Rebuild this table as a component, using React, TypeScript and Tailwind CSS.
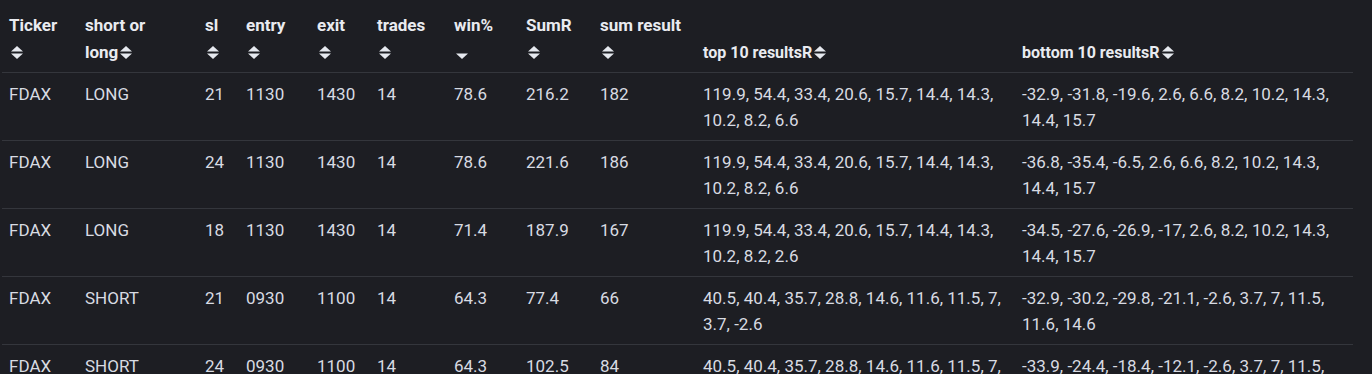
const headers: { label: string; w: number; sort: 'both' | 'down' }[] = [
  { label: 'Ticker', w: 76, sort: 'both' },
  { label: 'short or long', w: 120, sort: 'both' },
  { label: 'sl', w: 41, sort: 'both' },
  { label: 'entry', w: 71, sort: 'both' },
  { label: 'exit', w: 60, sort: 'both' },
  { label: 'trades', w: 77, sort: 'both' },
  { label: 'win%', w: 72, sort: 'down' },
  { label: 'SumR', w: 74, sort: 'both' },
  { label: 'sum result', w: 103, sort: 'both' },
  { label: 'top 10 resultsR', w: 319, sort: 'both' },
  { label: 'bottom 10 resultsR', w: 338, sort: 'both' },
];

const rows = [
  ['FDAX', 'LONG', '21', '1130', '1430', '14', '78.6', '216.2', '182', '119.9, 54.4, 33.4, 20.6, 15.7, 14.4, 14.3, 10.2, 8.2, 6.6', '-32.9, -31.8, -19.6, 2.6, 6.6, 8.2, 10.2, 14.3, 14.4, 15.7'],
  ['FDAX', 'LONG', '24', '1130', '1430', '14', '78.6', '221.6', '186', '119.9, 54.4, 33.4, 20.6, 15.7, 14.4, 14.3, 10.2, 8.2, 6.6', '-36.8, -35.4, -6.5, 2.6, 6.6, 8.2, 10.2, 14.3, 14.4, 15.7'],
  ['FDAX', 'LONG', '18', '1130', '1430', '14', '71.4', '187.9', '167', '119.9, 54.4, 33.4, 20.6, 15.7, 14.4, 14.3, 10.2, 8.2, 2.6', '-34.5, -27.6, -26.9, -17, 2.6, 8.2, 10.2, 14.3, 14.4, 15.7'],
  ['FDAX', 'SHORT', '21', '0930', '1100', '14', '64.3', '77.4', '66', '40.5, 40.4, 35.7, 28.8, 14.6, 11.6, 11.5, 7, 3.7, -2.6', '-32.9, -30.2, -29.8, -21.1, -2.6, 3.7, 7, 11.5, 11.6, 14.6'],
  ['FDAX', 'SHORT', '24', '0930', '1100', '14', '64.3', '102.5', '84', '40.5, 40.4, 35.7, 28.8, 14.6, 11.6, 11.5, 7, 3.7, -2.6', '-33.9, -24.4, -18.4, -12.1, -2.6, 3.7, 7, 11.5, 11.6, 14.6'],
];

function SortIcon({ mode }: { mode: 'both' | 'down' }) {
  return (
    <svg width="12" height="13" viewBox="0 0 12 13" className="inline-block align-[-1px] ml-[2px]">
      {mode === 'both' && <path d="M6 0 L12 5.5 L0 5.5 Z" fill="#e6e9ef" />}
      <path d="M0 7.5 L12 7.5 L6 13 Z" fill="#e6e9ef" />
    </svg>
  );
}

function HeaderCell({ label, sort }: { label: string; sort: 'both' | 'down' }) {
  // the two wide columns keep label and icon on one line
  if (label === 'top 10 resultsR' || label === 'bottom 10 resultsR') {
    return (
      <span className="text-[16px]">
        {label}
        <SortIcon mode={sort} />
      </span>
    );
  }
  if (label === 'short or long') {
    return (
      <>
        short or
        <br />
        long
        <SortIcon mode={sort} />
      </>
    );
  }
  return (
    <>
      {label}
      <br />
      <SortIcon mode={sort} />
    </>
  );
}

export default function App() {
  return (
    <div className="w-[1372px] h-[374px] overflow-hidden bg-[#1d1e23] font-['Roboto',sans-serif] text-[17px] text-[#d8dbe2]">
      <table className="table-fixed border-collapse ml-[2px] w-[1351px]">
        <colgroup>
          {headers.map((h) => (
            <col key={h.label} style={{ width: h.w }} />
          ))}
        </colgroup>
        <thead>
          <tr className="h-[72px] border-b border-[#34363c]">
            {headers.map((h) => (
              <th
                key={h.label}
                className="align-bottom text-left font-bold text-[17px] leading-[27px] text-[#e9ebf0] px-[7px] pb-[6px] pt-[10px] whitespace-nowrap"
              >
                <HeaderCell label={h.label} sort={h.sort} />
              </th>
            ))}
          </tr>
        </thead>
        <tbody>
          {rows.map((r, i) => (
            <tr key={i} className="h-[67px] border-b border-[#34363c]">
              {r.map((c, j) => (
                <td key={j} className="align-top px-[7px] pt-[8px] pb-[7px] leading-[26px]">
                  {c}
                </td>
              ))}
            </tr>
          ))}
        </tbody>
      </table>
    </div>
  );
}
